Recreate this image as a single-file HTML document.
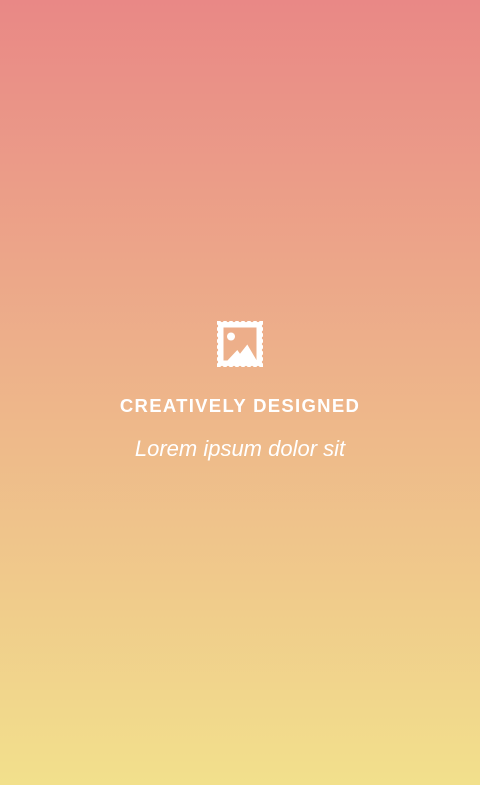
<!DOCTYPE html>
<html><head><style>
html,body{margin:0;padding:0}
body{width:480px;height:785px;overflow:hidden;background:linear-gradient(180deg,#E98886 0%,#EDB08A 45%,#F2E08C 100%);font-family:"Liberation Sans",sans-serif;position:relative}
.icon{position:absolute;left:216px;top:320px}
.t1{position:absolute;left:0;width:480px;top:395px;text-align:center;color:#fff;font-weight:bold;font-size:18.5px;letter-spacing:1.3px;line-height:22px}
.t2{position:absolute;left:0;width:480px;top:436px;text-align:center;color:#fff;font-style:italic;font-size:22px;line-height:26px}
</style></head><body>
<svg class="icon" width="48" height="48" viewBox="0 0 48 48">
<defs><mask id="m"><rect width="48" height="48" fill="#fff"/>
<g fill="#000">
<circle cx="6" cy="0.6" r="1.5"/><circle cx="12" cy="0.6" r="1.5"/><circle cx="18" cy="0.6" r="1.5"/><circle cx="24" cy="0.6" r="1.5"/><circle cx="30" cy="0.6" r="1.5"/><circle cx="36" cy="0.6" r="1.5"/><circle cx="42" cy="0.6" r="1.5"/>
<circle cx="6" cy="47.4" r="1.5"/><circle cx="12" cy="47.4" r="1.5"/><circle cx="18" cy="47.4" r="1.5"/><circle cx="24" cy="47.4" r="1.5"/><circle cx="30" cy="47.4" r="1.5"/><circle cx="36" cy="47.4" r="1.5"/><circle cx="42" cy="47.4" r="1.5"/>
<circle cx="0.6" cy="6" r="1.5"/><circle cx="0.6" cy="12" r="1.5"/><circle cx="0.6" cy="18" r="1.5"/><circle cx="0.6" cy="24" r="1.5"/><circle cx="0.6" cy="30" r="1.5"/><circle cx="0.6" cy="36" r="1.5"/><circle cx="0.6" cy="42" r="1.5"/>
<circle cx="47.4" cy="6" r="1.5"/><circle cx="47.4" cy="12" r="1.5"/><circle cx="47.4" cy="18" r="1.5"/><circle cx="47.4" cy="24" r="1.5"/><circle cx="47.4" cy="30" r="1.5"/><circle cx="47.4" cy="36" r="1.5"/><circle cx="47.4" cy="42" r="1.5"/>
<rect x="7.5" y="7.5" width="33" height="33"/>
</g></mask></defs>
<rect x="1" y="1" width="46" height="46" fill="#fff" mask="url(#m)"/>
<circle cx="15" cy="16.5" r="4" fill="#fff"/>
<path d="M11 41 L21.3 30 L24 33.7 L31.3 24.5 L41 41 Z" fill="#fff"/>
</svg>
<div class="t1">CREATIVELY DESIGNED</div>
<div class="t2">Lorem ipsum dolor sit</div>
</body></html>
